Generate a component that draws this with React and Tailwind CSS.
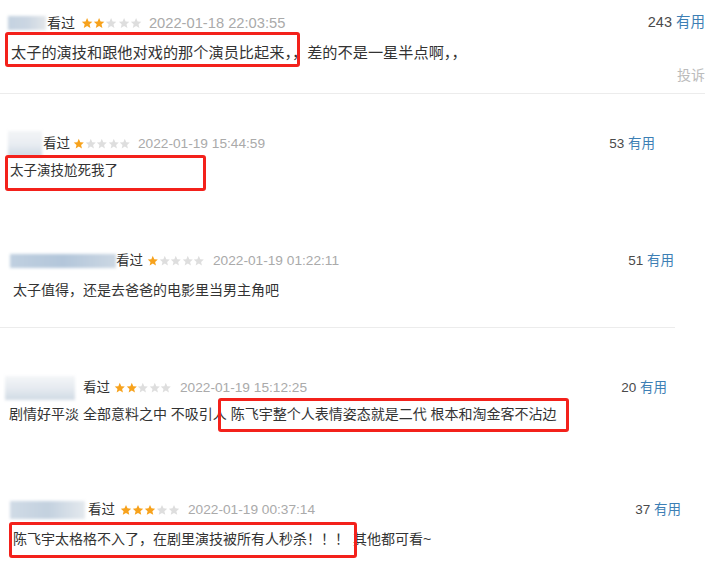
import React from 'react';

const font = { fontFamily: '"Liberation Sans", Arial, "Noto Sans CJK SC", sans-serif' };

const Star = ({ on, size }) => (
  <svg viewBox="0 0 24 24" width={size} height={size} className="shrink-0">
    <path
      d="M12 1.8l3 6.9 7.4.7-5.6 4.9 1.7 7.3L12 17.8l-6.5 3.8 1.7-7.3-5.6-4.9 7.4-.7z"
      fill={on ? '#f7a21c' : '#dedede'}
    />
  </svg>
);

const Stars = ({ n, size = 12 }) => (
  <span className="flex items-center">
    {[0, 1, 2, 3, 4].map((i) => (
      <Star key={i} on={i < n} size={size} />
    ))}
  </span>
);

const Blur = ({ className }) => (
  <span className={`block shrink-0 blur-[1.5px] ${className}`} />
);

const RedBox = ({ className }) => (
  <span className={`pointer-events-none absolute rounded-[3px] border-[3px] border-[#f3211b] ${className}`} />
);

const Useful = ({ n, className }) => (
  <span className={`whitespace-nowrap ${className}`}>
    <span className="text-[#4a4a4a]">{n}</span> <span className="text-[#3d7fb5]">有用</span>
  </span>
);

export default function App() {
  return (
    <div className="h-[573px] w-[705px] overflow-hidden bg-white text-[#333]" style={font}>
      {/* 1 */}
      <section className="relative h-[94px] w-[705px] border-b border-[#ececec] pt-[13px]">
        <div className="flex h-5 w-[705px] items-center text-[14px]">
          <Blur className="ml-2 h-[14px] w-[38px] bg-linear-to-r from-[#c4d2e0] via-[#cbd6e2] to-[#e2e6ea]" />
          <span className="ml-px">看过</span>
          <span className="ml-[6px]"><Stars n={2} size={12.2} /></span>
          <span className="ml-[7px] text-[14.7px] text-[#aaa]">2022-01-18 22:03:55</span>
          <Useful n="243" className="ml-auto text-[14.5px]" />
        </div>
        <div className="mt-[10px] h-5 whitespace-nowrap pl-[11px] text-[15.2px] leading-5">
          太子的演技和跟他对戏的那个演员比起来，，差的不是一星半点啊，，
        </div>
        <div className="mt-[4px] flex h-4 justify-end text-[14px] leading-4 text-[#bbb]">投诉</div>
        <RedBox className="left-[5px] top-[32px] h-[35px] w-[295px]" />
      </section>

      {/* 2 */}
      <section className="relative h-[136px] pt-[40px]">
        <div className="flex h-5 w-[655px] items-center text-[13.5px]">
          <Blur className="ml-2 h-[26px] w-[34px] bg-linear-to-b from-[#f2f4f6] via-[#e9edf2] to-[#cdd8e4]" />
          <span className="ml-px">看过</span>
          <span className="ml-[3px]"><Stars n={1} size={11.6} /></span>
          <span className="ml-[7px] text-[13.7px] text-[#aaa]">2022-01-19 15:44:59</span>
          <Useful n="53" className="ml-auto text-[13.5px]" />
        </div>
        <div className="mt-[7px] h-5 pl-[10px] text-[13.5px] leading-5">太子演技尬死我了</div>
        <RedBox className="left-[5px] top-[61px] h-[36px] w-[201px]" />
      </section>

      {/* 3 */}
      <section className="relative h-[98px] w-[675px] border-b border-[#ececec] pt-[21px]">
        <div className="flex h-5 w-[674px] items-center text-[13.5px]">
          <Blur className="ml-[10px] h-[14px] w-[106px] bg-linear-to-r from-[#c0d0e0] via-[#b3c6da] to-[#cbd7e3]" />
          <span>看过</span>
          <span className="ml-1"><Stars n={1} size={11.6} /></span>
          <span className="ml-2 text-[13.7px] text-[#aaa]">2022-01-19 01:22:11</span>
          <Useful n="51" className="ml-auto text-[13.5px]" />
        </div>
        <div className="mt-[9px] h-5 pl-[13px] text-[14px] leading-5">太子值得，还是去爸爸的电影里当男主角吧</div>
      </section>

      {/* 4 */}
      <section className="relative h-[142px] pt-[50px]">
        <div className="flex h-5 w-[667px] items-center text-[13.5px]">
          <Blur className="ml-[5px] h-[24px] w-[70px] bg-linear-to-b from-[#f4f6f8] via-[#e6ebf0] to-[#d0dae4]" />
          <span className="ml-2">看过</span>
          <span className="ml-1"><Stars n={2} size={11.6} /></span>
          <span className="ml-2 text-[13.7px] text-[#aaa]">2022-01-19 15:12:25</span>
          <Useful n="20" className="ml-auto text-[13.5px]" />
        </div>
        <div className="mt-[6px] h-5 whitespace-nowrap pl-[9px] text-[14px] leading-5">
          剧情好平淡 全部意料之中 不吸引人 陈飞宇整个人表情姿态就是二代 根本和淘金客不沾边
        </div>
        <RedBox className="left-[218px] top-[70px] h-[34px] w-[351px]" />
      </section>

      {/* 5 */}
      <section className="relative h-[103px] pt-[30px]">
        <div className="flex h-5 w-[681px] items-center text-[13.5px]">
          <Blur className="ml-[10px] h-[18px] w-[75px] bg-linear-to-r from-[#d0dbe6] via-[#c3d1df] to-[#e4e9ee]" />
          <span className="ml-[3px]">看过</span>
          <span className="ml-[5px]"><Stars n={3} size={12} /></span>
          <span className="ml-2 text-[13.7px] text-[#aaa]">2022-01-19 00:37:14</span>
          <Useful n="37" className="ml-auto text-[13.5px]" />
        </div>
        <div className="mt-[9px] h-5 whitespace-nowrap pl-[13px] text-[14px] leading-5">
          陈飞宇太格格不入了，在剧里演技被所有人秒杀！！！ 其他都可看~
        </div>
        <RedBox className="left-[9px] top-[52px] h-[36px] w-[348px]" />
      </section>
    </div>
  );
}
